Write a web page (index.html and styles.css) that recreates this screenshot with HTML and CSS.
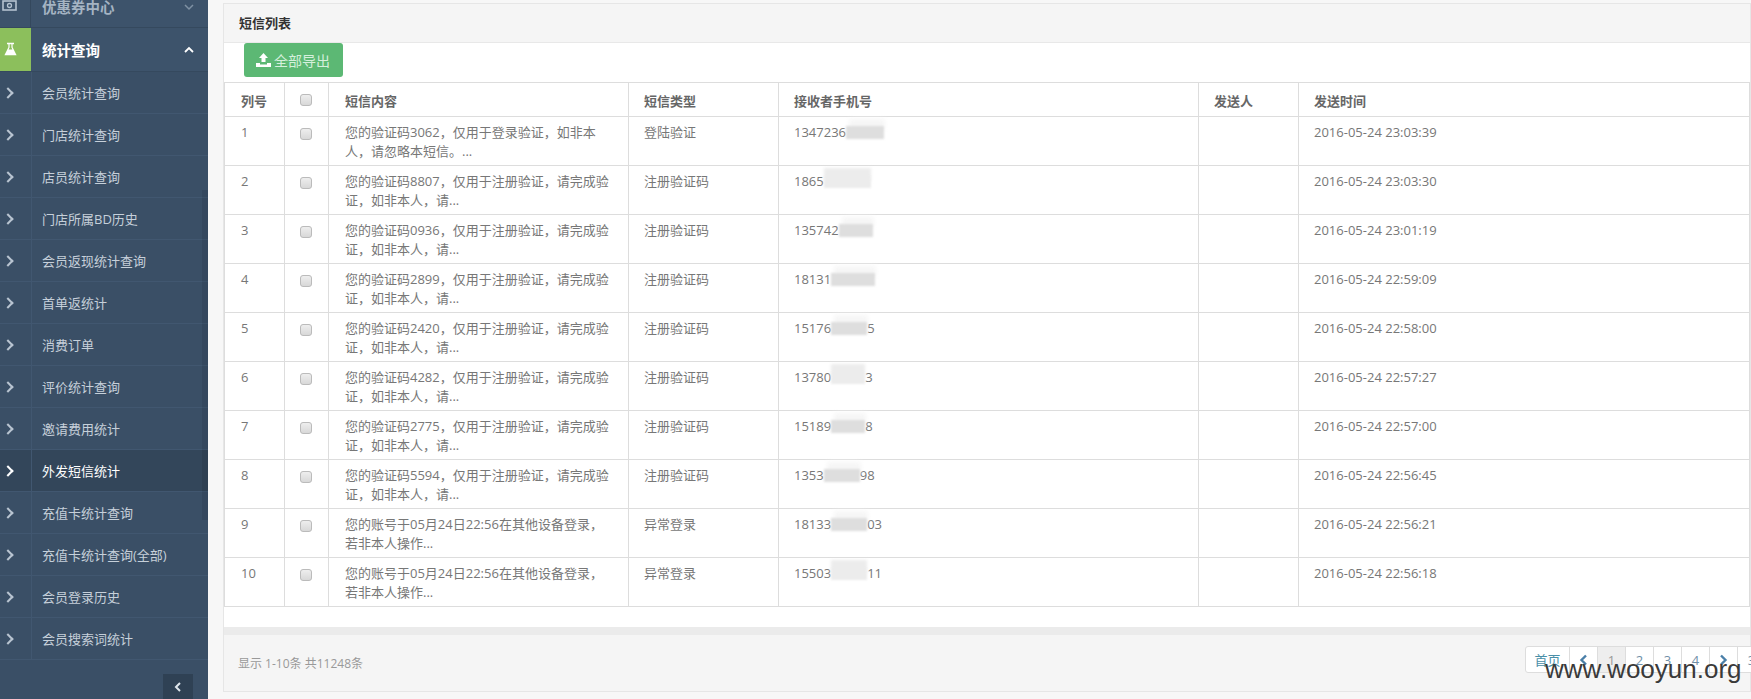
FILE: index.html
```html
<!DOCTYPE html>
<html lang="zh">
<head>
    <meta charset="UTF-8">
    <title>短信列表</title>
    <link rel="stylesheet" href="styles.css">
</head>
<body>
    <div class="layout">
        <div class="sidebar">
            <div class="menu-head menu-head-top">
                <span class="menu-icon">
                    <svg width="15" height="11" viewBox="0 0 15 11"><rect x="1" y="1" width="13" height="9" fill="none" stroke="#b4c2d0" stroke-width="1.6"/><circle cx="7.5" cy="5.5" r="2" fill="none" stroke="#b4c2d0" stroke-width="1.3"/></svg>
                </span>
                <span class="menu-title muted">优惠券中心</span>
                <svg class="caret" width="10" height="8" viewBox="0 0 10 8"><path d="M1 2l4 4 4-4" fill="none" stroke="#7f91a3" stroke-width="1.5"/></svg>
            </div>
            <div class="menu-head menu-head-open">
                <span class="menu-icon icon-green">
                    <svg width="13" height="14" viewBox="0 0 13 14"><path d="M3 .8h7v1.4H8.6v3L12.6 13.2H.4L4.4 5.200V2.200H3z" fill="#fff"/><path d="M5.600 2.200h1.800v3.300l1 2H4.600l1-2z" fill="#8cbf5c"/></svg>
                </span>
                <span class="menu-title strong">统计查询</span>
                <svg class="caret" width="10" height="8" viewBox="0 0 10 8"><path d="M1 6l4-4 4 4" fill="none" stroke="#fff" stroke-width="1.8"/></svg>
            </div>
            <ul class="submenu">
                <li><span class="arrow"></span><a>会员统计查询</a></li>
                <li><span class="arrow"></span><a>门店统计查询</a></li>
                <li><span class="arrow"></span><a>店员统计查询</a></li>
                <li><span class="arrow"></span><a>门店所属BD历史</a></li>
                <li><span class="arrow"></span><a>会员返现统计查询</a></li>
                <li><span class="arrow"></span><a>首单返统计</a></li>
                <li><span class="arrow"></span><a>消费订单</a></li>
                <li><span class="arrow"></span><a>评价统计查询</a></li>
                <li><span class="arrow"></span><a>邀请费用统计</a></li>
                <li class="active"><span class="arrow"></span><a>外发短信统计</a></li>
                <li><span class="arrow"></span><a>充值卡统计查询</a></li>
                <li><span class="arrow"></span><a>充值卡统计查询(全部)</a></li>
                <li><span class="arrow"></span><a>会员登录历史</a></li>
                <li><span class="arrow"></span><a>会员搜索词统计</a></li>
            </ul>
            <div class="scroll-thumb"></div>
            <div class="collapse-btn">
                <svg width="8" height="10" viewBox="0 0 8 10"><path d="M6 1L2 5l4 4" fill="none" stroke="#dfe6ec" stroke-width="2"/></svg>
            </div>
        </div>

        <div class="main">
            <div class="panel">
                <div class="panel-head">短信列表</div>
                <div class="toolbar">
                    <button class="btn-export">
                        <svg width="15" height="14" viewBox="0 0 15 14"><path d="M7.500 0L12 5H9.500v4h-4V5H3z M0 10h4v1.500h7V10h4v4H0z" fill="#fff"/></svg>
                        全部导出
                    </button>
                </div>
                <table class="sms-table">
                    <thead>
                        <tr>
                            <th class="col-no">列号</th>
                            <th class="col-check"><input type="checkbox"></th>
                            <th class="col-content">短信内容</th>
                            <th class="col-type">短信类型</th>
                            <th class="col-phone">接收者手机号</th>
                            <th class="col-sender">发送人</th>
                            <th>发送时间</th>
                        </tr>
                    </thead>
                    <tbody>
                        <tr>
                            <td>1</td><td class="check"><input type="checkbox"></td>
                            <td>您的验证码3062，仅用于登录验证，如非本人，请忽略本短信。...</td>
                            <td>登陆验证</td>
                            <td><span class="phone">1347236<i class="blur" style="width:38px"></i></span></td>
                            <td></td><td>2016-05-24 23:03:39</td>
                        </tr>
                        <tr>
                            <td>2</td><td class="check"><input type="checkbox"></td>
                            <td>您的验证码8807，仅用于注册验证，请完成验证，如非本人，请...</td>
                            <td>注册验证码</td>
                            <td><span class="phone">1865<i class="blur blur-light" style="width:47px"></i></span></td>
                            <td></td><td>2016-05-24 23:03:30</td>
                        </tr>
                        <tr>
                            <td>3</td><td class="check"><input type="checkbox"></td>
                            <td>您的验证码0936，仅用于注册验证，请完成验证，如非本人，请...</td>
                            <td>注册验证码</td>
                            <td><span class="phone">135742<i class="blur" style="width:34px"></i></span></td>
                            <td></td><td>2016-05-24 23:01:19</td>
                        </tr>
                        <tr>
                            <td>4</td><td class="check"><input type="checkbox"></td>
                            <td>您的验证码2899，仅用于注册验证，请完成验证，如非本人，请...</td>
                            <td>注册验证码</td>
                            <td><span class="phone">18131<i class="blur" style="width:44px"></i></span></td>
                            <td></td><td>2016-05-24 22:59:09</td>
                        </tr>
                        <tr>
                            <td>5</td><td class="check"><input type="checkbox"></td>
                            <td>您的验证码2420，仅用于注册验证，请完成验证，如非本人，请...</td>
                            <td>注册验证码</td>
                            <td><span class="phone">15176<i class="blur" style="width:36px"></i>5</span></td>
                            <td></td><td>2016-05-24 22:58:00</td>
                        </tr>
                        <tr>
                            <td>6</td><td class="check"><input type="checkbox"></td>
                            <td>您的验证码4282，仅用于注册验证，请完成验证，如非本人，请...</td>
                            <td>注册验证码</td>
                            <td><span class="phone">13780<i class="blur blur-light" style="width:34px"></i>3</span></td>
                            <td></td><td>2016-05-24 22:57:27</td>
                        </tr>
                        <tr>
                            <td>7</td><td class="check"><input type="checkbox"></td>
                            <td>您的验证码2775，仅用于注册验证，请完成验证，如非本人，请...</td>
                            <td>注册验证码</td>
                            <td><span class="phone">15189<i class="blur" style="width:34px"></i>8</span></td>
                            <td></td><td>2016-05-24 22:57:00</td>
                        </tr>
                        <tr>
                            <td>8</td><td class="check"><input type="checkbox"></td>
                            <td>您的验证码5594，仅用于注册验证，请完成验证，如非本人，请...</td>
                            <td>注册验证码</td>
                            <td><span class="phone">1353<i class="blur" style="width:36px"></i>98</span></td>
                            <td></td><td>2016-05-24 22:56:45</td>
                        </tr>
                        <tr>
                            <td>9</td><td class="check"><input type="checkbox"></td>
                            <td>您的账号于05月24日22:56在其他设备登录，若非本人操作...</td>
                            <td>异常登录</td>
                            <td><span class="phone">18133<i class="blur" style="width:36px"></i>03</span></td>
                            <td></td><td>2016-05-24 22:56:21</td>
                        </tr>
                        <tr>
                            <td>10</td><td class="check"><input type="checkbox"></td>
                            <td>您的账号于05月24日22:56在其他设备登录，若非本人操作...</td>
                            <td>异常登录</td>
                            <td><span class="phone">15503<i class="blur blur-light" style="width:36px"></i>11</span></td>
                            <td></td><td>2016-05-24 22:56:18</td>
                        </tr>
                    </tbody>
                </table>
                <div class="gap"></div>
                <div class="band"></div>
                <div class="panel-foot">
                    <span class="total">显示 1-10条 共11248条</span>
                    <div class="pager">
                        <a class="pg-first">首页</a>
                        <a class="pg-arrow">
                            <svg width="9" height="12" viewBox="0 0 9 12"><path d="M7 1.500L2.500 6 7 10.500" fill="none" stroke="#4a7fa8" stroke-width="2.400"/></svg>
                        </a>
                        <a class="pg-current">1</a>
                        <a>2</a>
                        <a>3</a>
                        <a>4</a>
                        <a class="pg-arrow">
                            <svg width="9" height="12" viewBox="0 0 9 12"><path d="M2 1.500L6.500 6 2 10.500" fill="none" stroke="#4a7fa8" stroke-width="2.400"/></svg>
                        </a>
                        <a>3</a>
                    </div>
                </div>
            </div>
        </div>
    </div>
    <div class="watermark">www.wooyun.org</div>
</body>
</html>
```

FILE: styles.css
```css
* {
    margin: 0;
    padding: 0;
    box-sizing: border-box;
}

html, body {
    width: 1751px;
    height: 699px;
    overflow: hidden;
}

body {
    font-family: "Open Sans", "Noto Sans CJK SC", sans-serif;
    font-size: 13px;
    color: #777;
    background: #f7f7f7;
    position: relative;
}

.layout {
    display: flex;
    height: 699px;
}

/* sidebar */
.sidebar {
    width: 208px;
    flex: none;
    background: #3a4f66;
    position: relative;
    display: flex;
    flex-direction: column;
}

.menu-head {
    display: flex;
    align-items: center;
    height: 44px;
    color: #fff;
    background: #3d536b;
    border-bottom: 1px solid #35495e;
}

.menu-head-top {
    height: 28px;
}

.menu-icon {
    width: 31px;
    height: 100%;
    flex: none;
    display: flex;
    align-items: center;
    justify-content: center;
    border-right: 1px solid #34485d;
}

.menu-head-top .menu-icon {
    justify-content: flex-start;
    align-items: flex-start;
    padding-left: 2px;
}

.icon-green {
    background: #8cbf5c;
    border-right: 0;
    padding-right: 11px;
    padding-bottom: 2px;
}

.menu-title {
    margin-left: 11px;
    font-size: 14.500px;
    font-weight: 700;
}

.menu-title.muted {
    color: #a5b4c3;
    margin-bottom: 14px;
}

.caret {
    margin-left: auto;
    margin-right: 14px;
}

.menu-head-top .caret {
    margin-bottom: 14px;
}

.submenu {
    list-style: none;
}

.submenu li {
    display: flex;
    align-items: center;
    height: 42px;
    border-bottom: 1px solid #415770;
    color: #c6d0da;
}

.submenu li.active {
    background: #33465a;
    color: #fff;
}

.arrow {
    width: 32px;
    height: 100%;
    flex: none;
    display: flex;
    align-items: center;
    padding-left: 4px;
    border-right: 1px solid #415770;
}

.arrow::before {
    content: "";
    width: 6px;
    height: 6px;
    border-top: 2px solid #b9c5d1;
    border-right: 2px solid #b9c5d1;
    transform: rotate(45deg);
}

.active .arrow::before {
    border-color: #fff;
}

.submenu a {
    margin-left: 10px;
    font-size: 13px;
}

.scroll-thumb {
    position: absolute;
    left: 202px;
    top: 190px;
    width: 6px;
    height: 330px;
    background: rgba(0, 0, 0, 0.08);
}

.collapse-btn {
    position: absolute;
    left: 163px;
    top: 674px;
    width: 30px;
    height: 25px;
    background: #2f4154;
    display: flex;
    align-items: center;
    justify-content: center;
}

/* main */
.main {
    flex: 1;
    min-width: 0;
    padding: 3px 0 0 15px;
}

.panel {
    width: 1528px;
    height: 689px;
    background: #fff;
    border: 1px solid #e6e6e6;
    display: flex;
    flex-direction: column;
}

.panel-head {
    height: 39px;
    padding: 0 15px;
    line-height: 38px;
    font-size: 13px;
    font-weight: 700;
    color: #333;
    background: #f5f5f5;
    border-bottom: 1px solid #e8e8e8;
}

.toolbar {
    height: 39px;
    padding: 0 20px;
    flex: none;
}

.btn-export {
    display: flex;
    align-items: center;
    gap: 3px;
    width: 99px;
    height: 34px;
    padding-left: 12px;
    border: 0;
    border-radius: 3px;
    background: #5cb874;
    color: #d5efdc;
    font-family: inherit;
    font-size: 14px;
}

.sms-table {
    width: 100%;
    table-layout: fixed;
    border-collapse: collapse;
    line-height: 19px;
}

.sms-table th,
.sms-table td {
    border: 1px solid #ddd;
    padding: 6px 15px 3px;
    text-align: left;
    vertical-align: top;
    font-size: 13px;
}

.sms-table th {
    height: 34px;
    padding-top: 9px;
    padding-bottom: 2px;
    color: #666;
    font-weight: 700;
}

.sms-table td {
    height: 49px;
}

.sms-table tr > :first-child,
.sms-table tr > :nth-child(3) {
    padding-left: 16px;
}

.sms-table input {
    appearance: none;
    display: block;
    width: 12px;
    height: 12px;
    margin: 5px 0 0;
    border: 1px solid #bbb;
    border-radius: 3px;
    background: linear-gradient(#eee, #d8d8d8);
}

.sms-table th input {
    margin-top: 2px;
}

.col-no { width: 60px; }
.col-check { width: 44px; }
.col-content { width: 300px; }
.col-type { width: 150px; }
.col-phone { width: 420px; }
.col-sender { width: 100px; }

.phone {
    white-space: nowrap;
}

/* 手机号打码 */
.blur {
    display: inline-block;
    height: 13px;
    vertical-align: -2px;
    background: #dedede;
    filter: blur(1px);
    box-shadow: 2px -8px 4px -1px #f6f6f6;
}

.blur-light {
    background: #ececec;
    box-shadow: 0 -7px 2px 0 #ececec;
}

.gap {
    height: 20px;
    flex: none;
}

.band {
    height: 8px;
    flex: none;
    background: #ebebeb;
}

.panel-foot {
    flex: 1;
    display: flex;
    align-items: center;
    padding: 0 14px;
    background: #f5f5f5;
    color: #999;
    font-size: 12px;
}

.pager {
    position: absolute;
    left: 1525px;
    top: 646px;
    display: flex;
    height: 27px;
    background: #fff;
    border: 1px solid #ddd;
    border-radius: 3px 0 0 3px;
    font-size: 13px;
}

.pager a {
    width: 28px;
    display: flex;
    align-items: center;
    justify-content: center;
    color: #6f8fa8;
    border-right: 1px solid #ddd;
}

.pager .pg-first {
    width: 44px;
    color: #4a8fa8;
}

.pager .pg-current {
    background: #eee;
    color: #999;
}

.watermark {
    position: absolute;
    left: 1545px;
    top: 654px;
    font-family: "Liberation Sans", sans-serif;
    font-size: 26px;
    color: #3a3a3a;
}
```
